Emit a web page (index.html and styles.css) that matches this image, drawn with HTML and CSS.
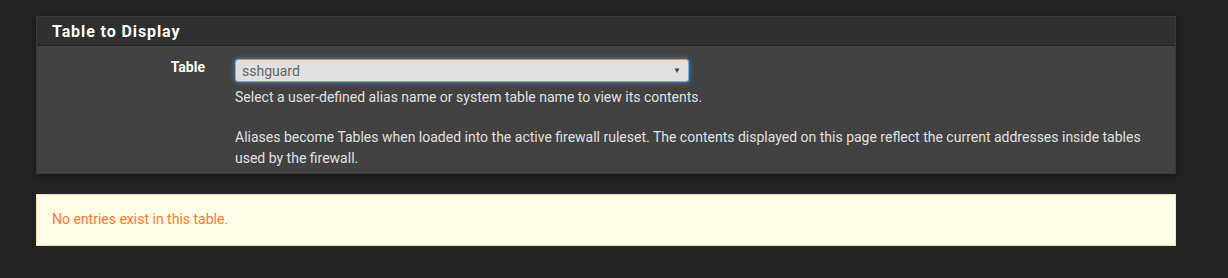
FILE: index.html
```html
<!DOCTYPE html>
<html lang="en">
<head>
  <meta charset="UTF-8">
  <title>Diagnostics: Tables</title>
  <link rel="stylesheet" href="styles.css">
</head>
<body>
  <div class="container">
    <div class="panel">
      <div class="panel-heading">
        <h2 class="panel-title">Table to Display</h2>
      </div>
      <div class="panel-body">
        <div class="form-group">
          <label class="field-label" for="tablename">Table</label>
          <div class="field">
            <div class="select-box" id="tablename">
              <span>sshguard</span>
              <span class="caret">&#9660;</span>
            </div>
            <p class="help">Select a user-defined alias name or system table name to view its contents.</p>
            <p class="help note">Aliases become Tables when loaded into the active firewall ruleset. The contents displayed on this page reflect the current addresses inside tables used by the firewall.</p>
          </div>
        </div>
      </div>
    </div>

    <div class="alert">No entries exist in this table.</div>
  </div>
</body>
</html>
```

FILE: styles.css
```css
body {
  margin: 0;
  background-color: #222222;
  font-family: Roboto, "Liberation Sans", sans-serif;
  font-size: 14px;
  color: #e0e0e0;
}
.container {
  width: 1140px;
  padding: 16px 0 0 36px;
}
.panel {
  background-color: #424242;
  border: 1px solid #3a3a3a;
  box-shadow: 0 2px 6px rgba(0, 0, 0, 0.3);
  margin-bottom: 20px;
}
.panel-heading {
  background-color: #303030;
  border-bottom: 1px solid #1e1e1e;
  padding: 5px 15px 4px 15px;
}
.panel-title {
  margin: 0;
  font-size: 16px;
  font-weight: bold;
  letter-spacing: 0.9px;
  line-height: 19px;
  color: #ffffff;
}
.panel-body {
  padding: 13px 0 4px 0;
}
.form-group {
  display: grid;
  grid-template-columns: 170px 1fr;
  column-gap: 28px;
}
.field-label {
  text-align: right;
  font-weight: bold;
  color: #ffffff;
  padding-right: 2px;
}
.field {
  padding-right: 20px;
}
.select-box {
  box-sizing: border-box;
  width: 454px;
  height: 23px;
  display: flex;
  align-items: center;
  justify-content: space-between;
  padding: 0 7px 0 6px;
  background-color: #e0e0e0;
  color: #666666;
  font-size: 14px;
  border: 1px solid #66afe9;
  border-radius: 3px;
  box-shadow: 0 0 5px rgba(102, 175, 233, 0.7);
}
.caret {
  font-size: 8px;
  color: #444444;
}
.help {
  margin: 5px 0 0 0;
  line-height: 21px;
}
.help.note {
  margin-top: 19px;
}
.alert {
  background-color: #fffde8;
  border: 1px solid #fbe3a8;
  color: #ff7a2f;
  padding: 14px 15px 15px 15px;
  line-height: 21px;
}
```
